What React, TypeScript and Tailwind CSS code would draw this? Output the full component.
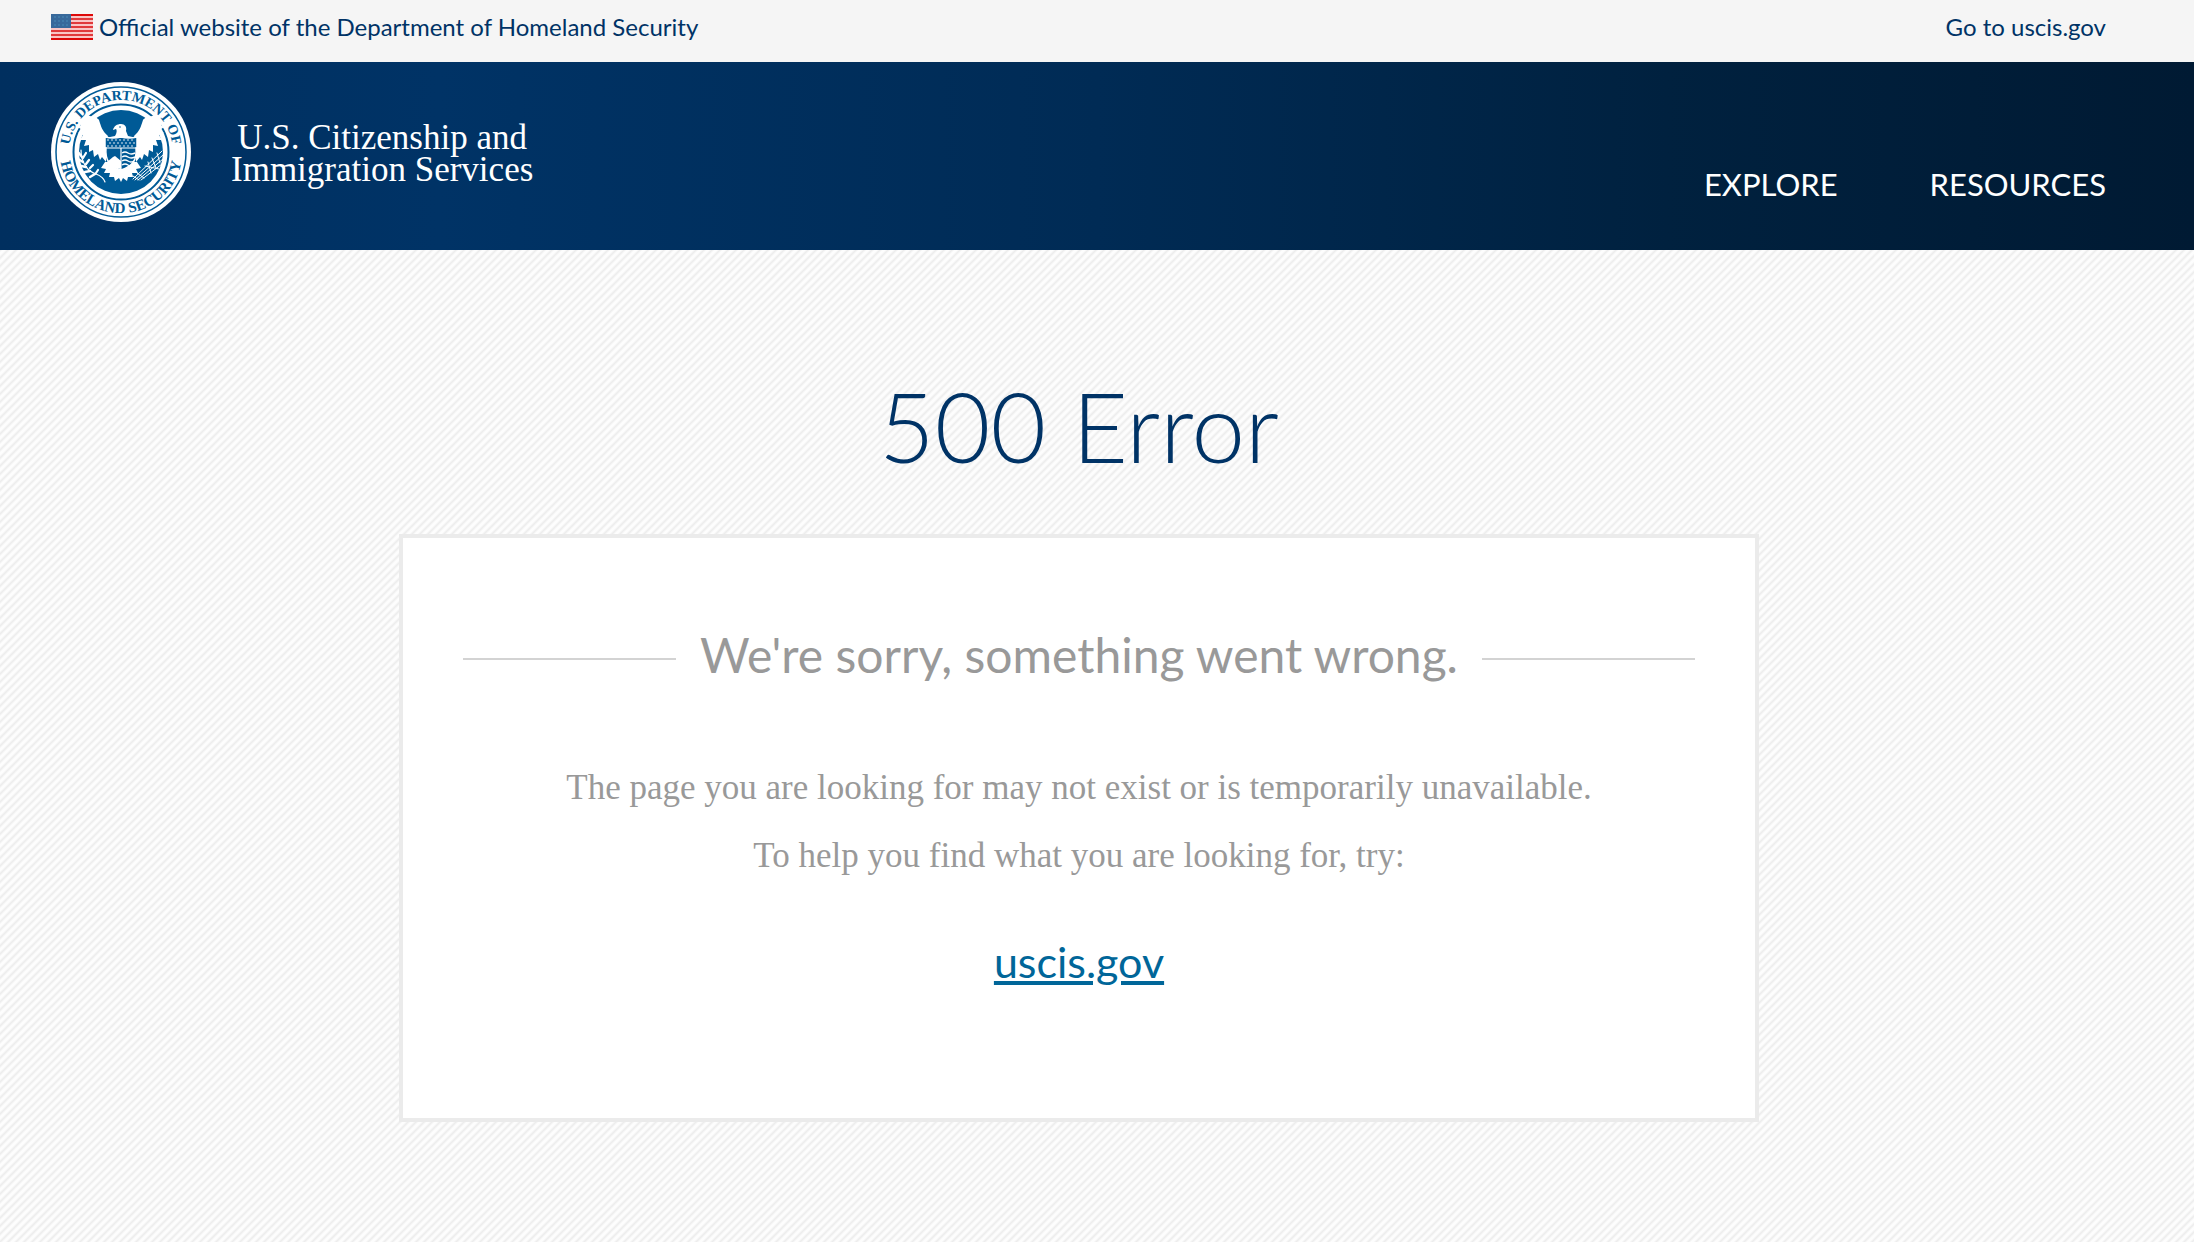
import type { ReactNode } from 'react'

const NAV_ITEMS = ['Explore', 'Resources']

function FlagIcon() {
  return (
    <svg viewBox="0 0 42 26" className="w-[42px] h-[26px] shrink-0" aria-hidden="true">
      <rect width="42" height="26" fill="#f9c5c5" />
      {[0, 1, 2, 3, 4, 5, 6].map((i) => (
        <rect key={i} y={i * 4} width="42" height="2" fill={i === 0 || i === 6 ? '#dd0808' : '#e0393b'} />
      ))}
      <rect width="20" height="14" fill="#38699b" />
      <g fill="#4380ae">
        {[3, 7, 11].map((y) =>
          [3, 7, 11, 15].map((x) => <circle key={`${x}-${y}`} cx={x + (y % 2)} cy={y} r="1" />)
        )}
      </g>
    </svg>
  )
}

function Wing() {
  return (
    <path
      fill="#fff"
      d="M25 27 C28 31 33 32 39 34 C43 35 47 36 48 38 C50 44 51 49 57 54 L55 60 L55 80 L51 75 L49 78 L47 72 L43 75 L42 68 L38 70 L38 63 L33 64 L35 58 L29 58 L32 53 L27 51 L31 48 L27 45 L30 43 L26 39 L29 38 L25 33 L28 33 Z"
    />
  )
}

function DhsSeal() {
  return (
    <svg viewBox="0 0 140 140" className="w-[140px] h-[140px] shrink-0" role="img" aria-label="Department of Homeland Security seal">
      <defs>
        <path id="seal-arc" d="M26 97.7 A52 52 0 1 1 114 97.7" />
        <path id="seal-bottom" d="M21.2 33.6 A61 61 0 1 0 118.8 33.6" />
      </defs>
      <circle cx="70" cy="70" r="70" fill="#fff" />
      <circle cx="70" cy="70" r="65" fill="none" stroke="#005a96" strokeWidth="1.5" />
      <circle cx="70" cy="70" r="47.5" fill="#fff" stroke="#005a96" strokeWidth="2" />
      <circle cx="70" cy="70" r="42" fill="#005a96" />

      {/* Eagle wings, mirrored around the shield */}
      <Wing />
      <g transform="matrix(-1 0 0 1 140 0)">
        <Wing />
      </g>

      {/* Tail */}
      <path fill="#fff" d="M54 80 L86 80 L90 86 L85 87 L87 91 L81 91 L82 95 L77 95 L76 99 L72 96 L70 100 L68 96 L64 99 L63 95 L58 95 L59 91 L53 91 L55 87 L50 86 Z" />

      {/* Olive branch */}
      <g fill="none" stroke="#fff" strokeWidth="1.2" strokeLinecap="round">
        <path d="M30 68 C30 80 36 89 45 92 C50 94 53 96 54 100" />
        <path d="M31 75 L27 70 M32 80 L27 77 M35 85 L30 84 M39 89 L34 90 M44 92 L39 95" strokeWidth="2.4" />
        <path d="M32 76 L35 71 M35 82 L38 78 M39 86 L42 83 M45 91 L47 88" strokeWidth="2.2" />
      </g>

      {/* Arrows */}
      <g stroke="#fff" strokeWidth="1" strokeLinecap="round">
        <path d="M82 97 L111 69 M84 98 L112 73 M87 98 L112 77 M90 98 L111 82 M82 94 L88 98 M86 91 L93 96 M97 80 L100 91 M101 76 L105 86 M106 71 L109 81 M94 84 L108 87" />
      </g>

      {/* Neck and head */}
      <path fill="#fff" d="M54 56 L64 54 C66 51 66 48 65 47 L62 48 C63 44 66 42 70 42 C74 42 76 45 75 49 L77 54 L86 56 L86 61 L54 61 Z" />
      <circle cx="69" cy="45" r="0.8" fill="#005a96" />

      {/* Shield */}
      <path fill="#005a96" stroke="#fff" strokeWidth="1.5" d="M54 55 Q62 57 70 55 Q78 57 86 55 V66 H85 C86 78 82 84 70 88 C58 84 54 78 55 66 H54 Z" />
      <path stroke="#fff" strokeWidth="1.2" d="M54 66 H86 M70 66 V88" />
      <g fill="#fff">
        {[58, 61, 64].map((y, row) =>
          [57, 61, 65, 69, 73, 77, 81].map((x) => <circle key={`${x}-${y}`} cx={x + (row % 2) * 2} cy={y} r="0.8" />)
        )}
      </g>
      <path fill="#fff" d="M56 80 L62 75 L64 74 L70 79 V87 C63 86 58 84 56 80 Z" />
      <path fill="none" stroke="#fff" strokeWidth="1.4" d="M71 71 Q74 69 77 71 T84 71 M71 75 Q74 73 77 75 T84 75 M71 79 Q74 77 77 79 T83 79 M71 83 Q74 81 77 83 T80 83" />

      <g fill="#005a96" className="font-['Liberation_Serif',serif] font-bold">
        <text textAnchor="middle" className="text-[14px]">
          <textPath href="#seal-arc" startOffset="50%">U.S. DEPARTMENT OF</textPath>
        </text>
        <text textAnchor="middle" className="text-[15px]">
          <textPath href="#seal-bottom" startOffset="50%">HOMELAND SECURITY</textPath>
        </text>
      </g>
    </svg>
  )
}

function Header() {
  return (
    <header>
      <div className="flex items-start justify-between bg-[#f5f5f5] h-[62px] pl-[51px] pr-[88px] text-[#003366] text-[24px] leading-7 pt-[13px]">
        <div className="flex items-center gap-[6px]">
          <FlagIcon />
          <span>Official website of the Department of Homeland Security</span>
        </div>
        <a href="#uscis" className="hover:underline">Go to uscis.gov</a>
      </div>
      <div className="flex items-start justify-between h-[188px] pt-5 pl-[51px] pr-[88px] text-white bg-[linear-gradient(to_right,#002f5f_0%,#003366_20%,#002b55_50%,#00213f_76%,#001a33_100%)]">
        <a href="#home" className="flex items-center gap-10">
          <DhsSeal />
          <span className="pt-1 font-['Liberation_Serif',serif] text-[35px] leading-8 text-center">
            U.S. Citizenship and
            <br />
            Immigration Services
          </span>
        </a>
        <nav className="flex gap-[92px] pt-[82px] text-[31px] leading-10 uppercase">
          {NAV_ITEMS.map((item) => (
            <a key={item} href={`#${item.toLowerCase()}`}>{item}</a>
          ))}
        </nav>
      </div>
    </header>
  )
}

function RuledHeading({ children }: { children: ReactNode }) {
  return (
    <div className="flex items-center gap-6">
      <span className="h-[2px] flex-1 bg-[#d3d3d3]" />
      <h2 className="pb-2 text-[48px] leading-[60px]">{children}</h2>
      <span className="h-[2px] flex-1 bg-[#d3d3d3]" />
    </div>
  )
}

export default function App() {
  return (
    <div className="flex flex-col min-h-screen font-['Lato',sans-serif]">
      <Header />
      <main className="flex-1 pr-9 pb-[120px] text-center bg-[#fcfcfc] bg-[linear-gradient(135deg,#ededed_0%,#fdfdfd_18%,#fdfdfd_32%,#ededed_50%,#fdfdfd_68%,#fdfdfd_82%,#ededed_100%)] bg-size-[8px_8px]">
        <h1 className="pt-[116px] text-[96px] leading-[120px] font-light text-[#003366]">500 Error</h1>
        <section className="max-w-[1360px] mx-auto mt-12 px-[60px] pt-[87px] pb-[126px] bg-white border-4 border-[#ebebeb] text-[#999]">
          <RuledHeading>We're sorry, something went wrong.</RuledHeading>
          <div className="mt-[61px] font-['Liberation_Serif',serif] text-[35px] leading-[68px]">
            <p>The page you are looking for may not exist or is temporarily unavailable.</p>
            <p>To help you find what you are looking for, try:</p>
          </div>
          <a href="#uscis" className="inline-block mt-[42px] text-[43px] leading-[60px] text-[#006699] underline">
            uscis.gov
          </a>
        </section>
      </main>
    </div>
  )
}
